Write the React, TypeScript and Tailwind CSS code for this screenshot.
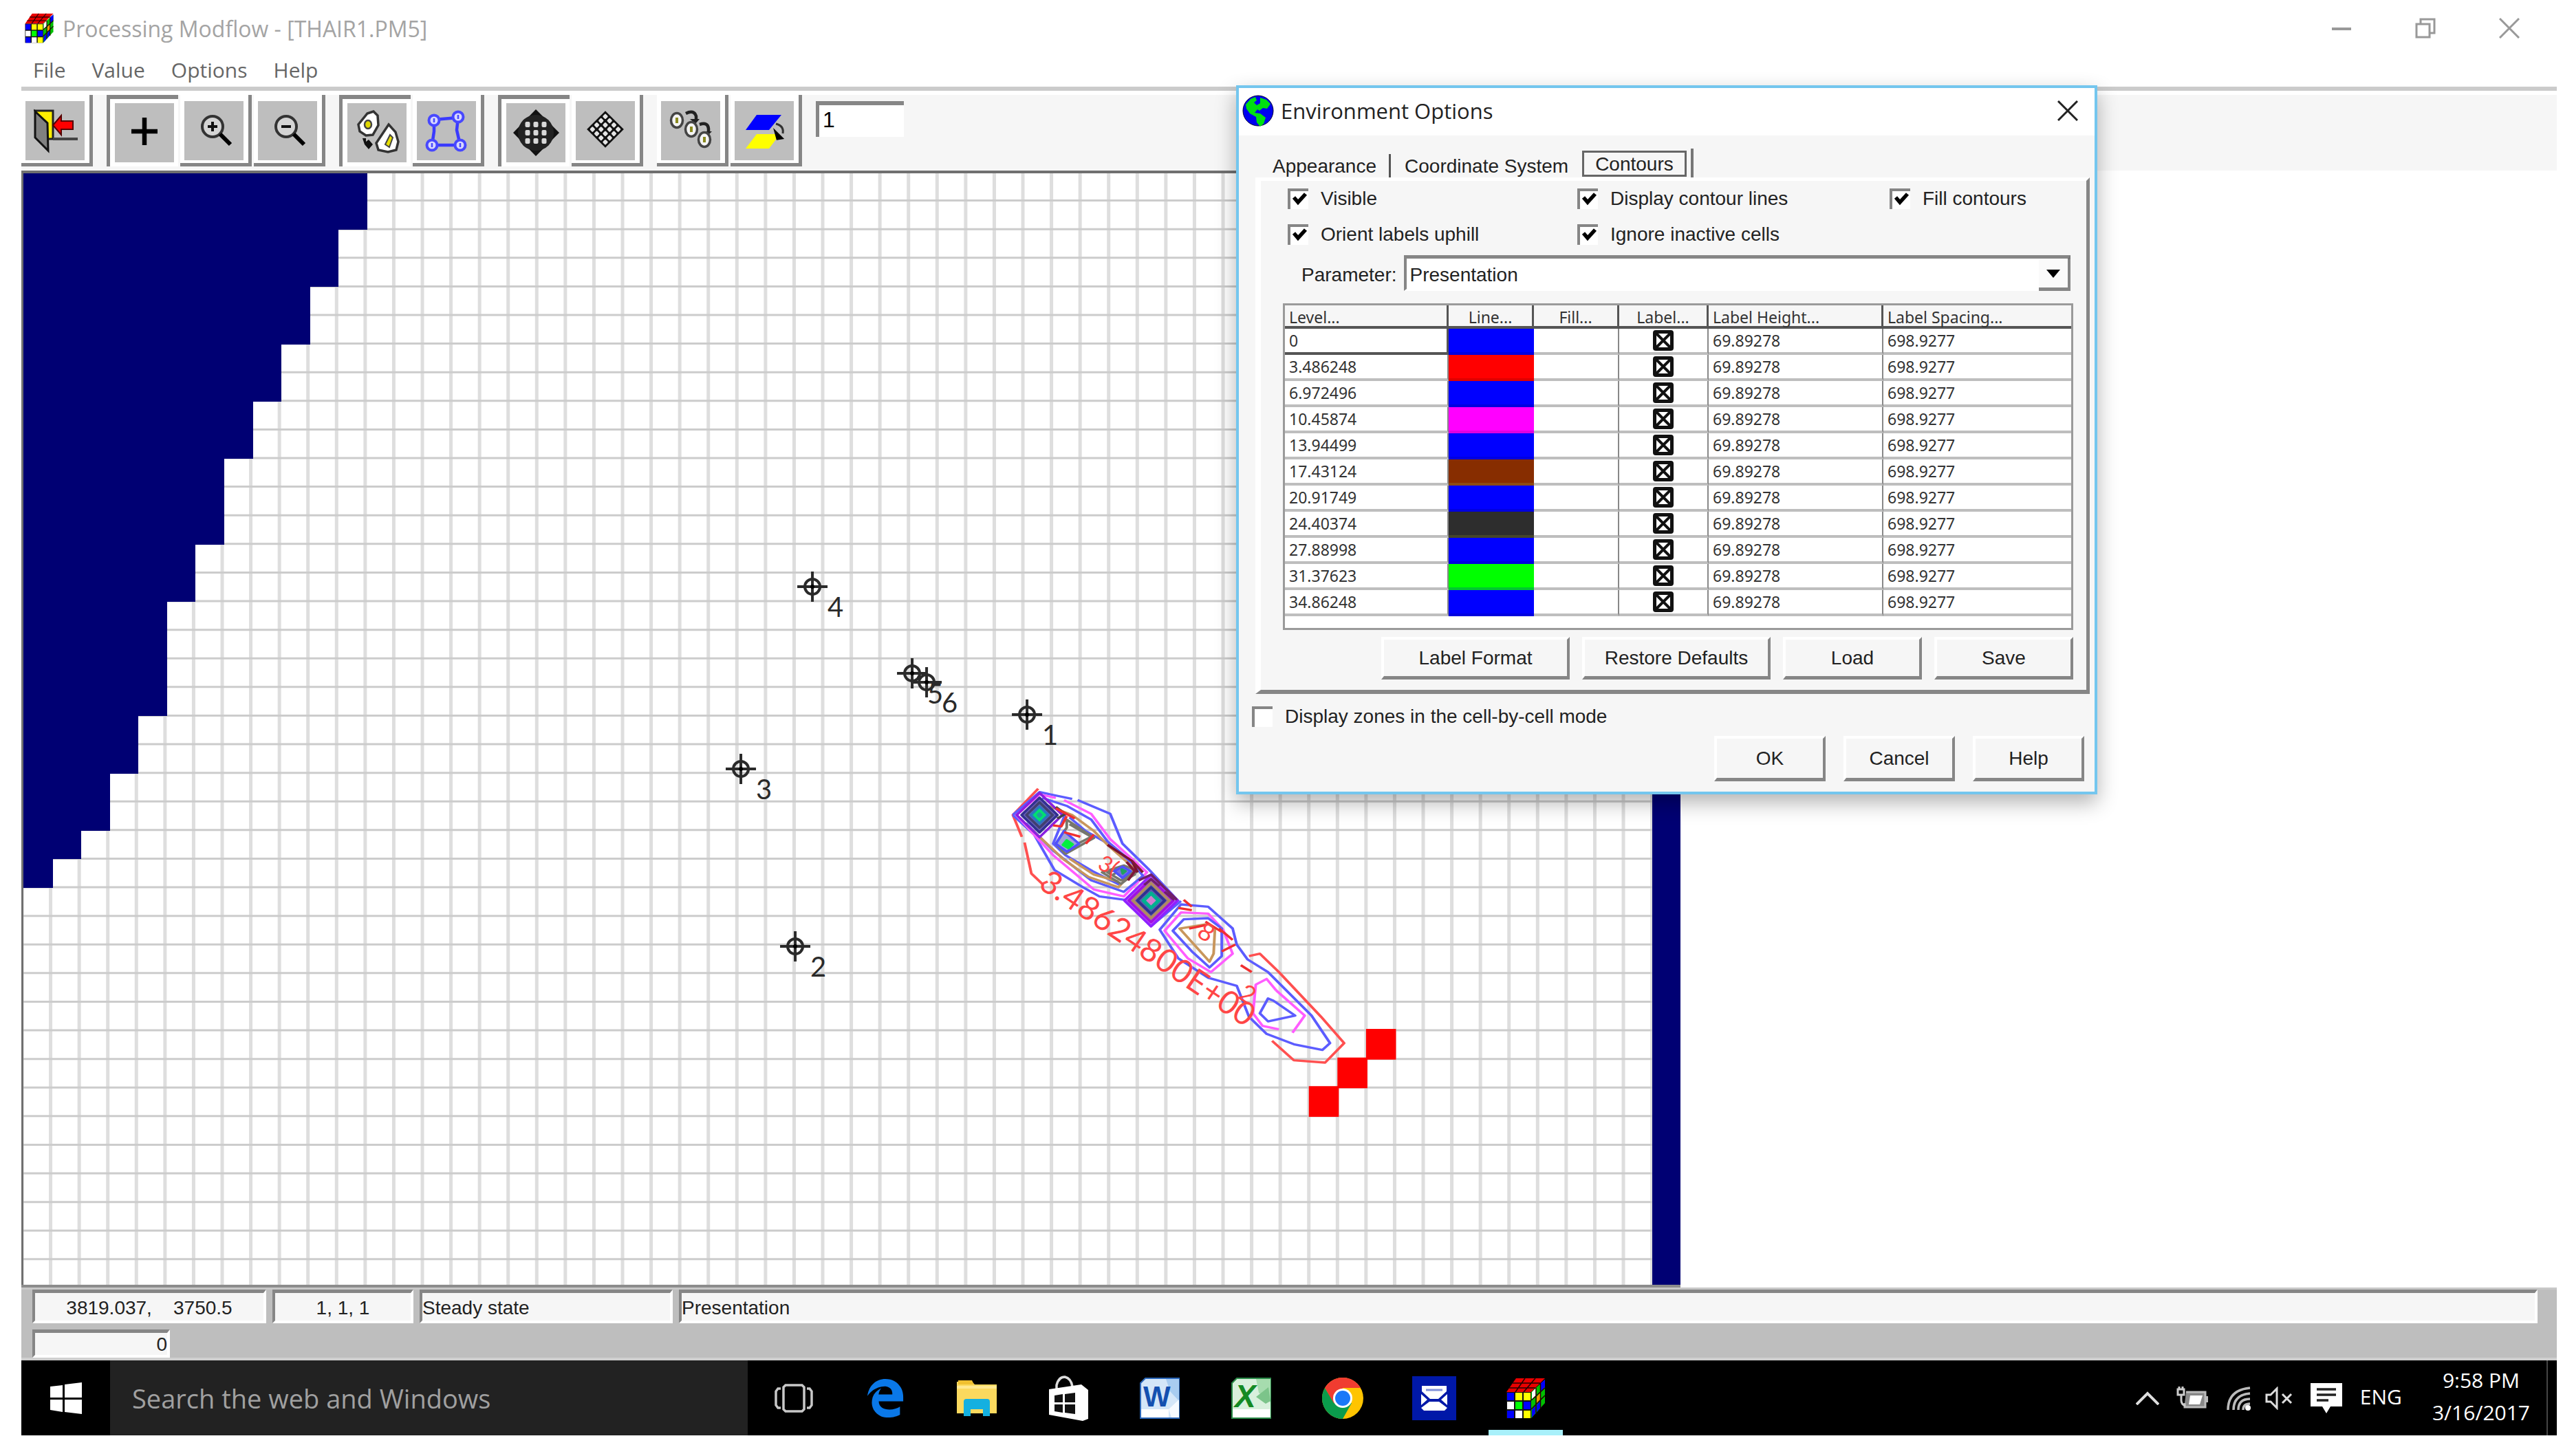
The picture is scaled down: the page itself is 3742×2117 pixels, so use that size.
import React, { useState } from 'react';
import { FaEdgeLegacy } from 'react-icons/fa';

// ---------- data ----------

interface ContourLevel {
  level: string;
  color: string;
}

const levels: ContourLevel[] = [
  { level: '0', color: 'bg-[#0000ff] border-[#0000e0]' },
  { level: '3.486248', color: 'bg-[#ff0000] border-[#e00000]' },
  { level: '6.972496', color: 'bg-[#0000ff] border-[#0000e0]' },
  { level: '10.45874', color: 'bg-[#ff00ff] border-[#e000e0]' },
  { level: '13.94499', color: 'bg-[#0000ff] border-[#0000e0]' },
  { level: '17.43124', color: 'bg-[#872d00] border-[#8c4a14]' },
  { level: '20.91749', color: 'bg-[#0000ff] border-[#0000e0]' },
  { level: '24.40374', color: 'bg-[#2d2d2d] border-[#45452a]' },
  { level: '27.88998', color: 'bg-[#0000ff] border-[#0000e0]' },
  { level: '31.37623', color: 'bg-[#00ff00] border-[#00c830]' },
  { level: '34.86248', color: 'bg-[#0000ff] border-[#0000e0]' },
];

const wells = [
  { id: 4, x: 1181, y: 853 },
  { id: 5, x: 1326, y: 979 },
  { id: 6, x: 1347, y: 992 },
  { id: 1, x: 1493, y: 1039 },
  { id: 3, x: 1077, y: 1118 },
  { id: 2, x: 1156, y: 1376 },
];

// Number of inactive (navy) cells at the start of every model row
const inactiveCells = [12, 12, 11, 11, 10, 10, 9, 9, 8, 8, 7, 7, 7, 6, 6, 5, 5, 5, 5, 4, 4, 3, 3, 2, 1];

const riverCells = [
  [47, 30],
  [46, 31],
  [45, 32],
];

// Model grid geometry
const COLS = 58;
const ROWS = 39;
const X0 = 32;
const Y0 = 250;
const CW = 41.57;
const CH = 41.6;

// ---------- shared icons ----------

const CubeIcon = ({ className }: { className: string }) => (
  <svg viewBox="0 0 60 60" className={className} aria-hidden="true">
    <path d="M2 21 16 1h42L38 21z" fill="#e80000" />
    <path d="M38 21 58 3v34L38 59z" fill="#00c000" />
    <path d="M2 21h36v38H2z" fill="#111" />
    <path d="M3 22h10v11H3zM27 35h10v11H27zM3 48h10v11H3z" fill="#0000ff" />
    <path d="M15 22h10v11H15zM27 22h10v11H27zM27 48h10v11H27z" fill="#ffff00" />
    <path d="M3 35h10v11H3zM15 48h10v11H15z" fill="#fff" />
    <path d="M15 35h10v11H15z" fill="#00ff00" />
    <path d="M52 8l6-5v11l-6 6zM39 47l5-6v11l-5 6zM46 40l5-6v10l-5 6z" fill="#0000ff" />
    <path d="M39 21l6-6v11l-6 6z" fill="#fff" />
    <path d="M46 28l5-6v10l-5 6z" fill="#f59a00" />
    <path d="M15 21 29 1M27 21 44 1M11 8h40M6 15h38M45 15v36M51.500 9v36M38 33l20-18M38 46l20-20" stroke="#200" strokeWidth="1.500" fill="none" />
  </svg>
);

const GlobeIcon = () => (
  <svg viewBox="0 0 46 46" className="size-[46px]" aria-hidden="true">
    <circle cx="23" cy="23" r="22" fill="#0000f0" stroke="#003" strokeWidth="1" />
    <path d="M5 14 12 6l7-3 2 5-4 3 4 4 5-3 0-8 9 3 6 6-5 7-6-1-5 4-3-2-4 5 8 1 8 6-3 9-5 4-5-6-1-8-9-5-5-7z" fill="#00e010" />
  </svg>
);

const ZoomGlass = ({ plus }: { plus?: boolean }) => (
  <svg viewBox="0 0 86 86" className="size-full" aria-hidden="true">
    <circle cx="41" cy="37" r="15" fill="#d4d4d4" stroke="#333" strokeWidth="4" />
    <path d="M52 48 67 63" stroke="#000" strokeWidth="6" />
    <path d="M34 37h14" stroke="#111" strokeWidth="4" />
    {plus && <path d="M41 30v14" stroke="#111" strokeWidth="4" />}
  </svg>
);

const dots = [0, 1, 2, 3];

// ---------- toolbar ----------

interface ToolButtonProps {
  label: string;
  pressed?: boolean;
  children: React.ReactNode;
}

const ToolButton = ({ label, pressed, children }: ToolButtonProps) => (
  <button
    type="button"
    aria-label={label}
    aria-pressed={!!pressed}
    className={
      pressed
        ? 'h-[104px] w-[104px] border-t-[6px] border-l-[5px] border-[#868686] bg-white pt-[6px] pr-[6px] pb-[6px] pl-[7px]'
        : 'h-[104px] w-[104px] border-r-[5px] border-b-[5px] border-[#868686] bg-white pt-[9px] pr-[7px] pb-[4px] pl-[6px]'
    }
  >
    <span className="block size-full bg-[#bebebe]">{children}</span>
  </button>
);

const Toolbar = () => (
  <div className="border-t-[6px] border-[#cbcbcb]">
    <div role="toolbar" className="flex h-[116px] items-start gap-[20px] border-t-[6px] border-white bg-[#f6f6f6]">
      <ToolButton label="Leave editor">
        <svg viewBox="0 0 86 86" className="size-full" aria-hidden="true">
          <path d="M14 14h26v41H30z" fill="#ffee00" stroke="#222" strokeWidth="3" />
          <path d="M14 15 32 32l1 40-19-19z" fill="#808080" stroke="#111" strokeWidth="3" />
          <path d="M40 55h36" stroke="#444" strokeWidth="4" />
          <path d="M40 35 52 21v8h17v12H52v8z" fill="#f00" stroke="#500" strokeWidth="2" />
        </svg>
      </ToolButton>

      <div className="flex gap-[3px]">
        <ToolButton label="Assign value" pressed>
          <svg viewBox="0 0 86 86" className="size-full" aria-hidden="true">
            <path d="M24 41h38M43 21v40" stroke="#000" strokeWidth="6.5" />
          </svg>
        </ToolButton>
        <ToolButton label="Zoom in"><ZoomGlass plus /></ToolButton>
        <ToolButton label="Zoom out"><ZoomGlass /></ToolButton>
      </div>

      <div className="flex gap-[3px]">
        <ToolButton label="Cell by cell" pressed>
          <svg viewBox="0 0 86 86" className="size-full" aria-hidden="true">
            <path d="M29 15 38 12l6 6 1 14-8 14-10 1-9-6-2-10z" fill="#fff" stroke="#333" strokeWidth="3.5" />
            <ellipse cx="30" cy="31" rx="5" ry="6" fill="#e0d800" stroke="#444" strokeWidth="2.5" />
            <path d="M60 31 70 42l4 14-3 12-12 3-14-3-3-10 6-9z" fill="#fff" stroke="#333" strokeWidth="3.5" />
            <path d="M55 60 62 46l4 4-5 14z" fill="#e8e000" stroke="#444" strokeWidth="2" />
            <path d="M22 51h5v5l4-3 6 7-6 7-6-7z" fill="#111" />
          </svg>
        </ToolButton>
        <ToolButton label="Polygon">
          <svg viewBox="0 0 86 86" className="size-full" aria-hidden="true">
            <path d="M25 27 60 24 58 42 63 64H22l3-20z" fill="none" stroke="#3a3aff" strokeWidth="4.5" />
            <g fill="#d8d8ff" stroke="#4848ff" strokeWidth="4">
              <circle cx="25" cy="28" r="7.5" />
              <circle cx="60" cy="23" r="7.5" />
              <circle cx="63" cy="64" r="7.5" />
              <circle cx="22" cy="64" r="7.5" />
            </g>
            <path d="M25 25v6M60 20v6M63 61v6M22 61v6" stroke="#4848ff" strokeWidth="2.5" />
          </svg>
        </ToolButton>
      </div>

      <div className="flex gap-[3px]">
        <ToolButton label="Row and column copy" pressed>
          <svg viewBox="0 0 86 86" className="size-full" aria-hidden="true">
            <path d="M43 9 77 43 43 77 10 43z" fill="#111" />
            <circle cx="43" cy="43" r="26" fill="#222" />
            {[31, 43, 55].map((y) =>
              [31, 43, 55].map((x) => <rect key={`${x}-${y}`} x={x - 3.5} y={y - 4} width="7" height="8" rx="2" fill="#d8d8d8" />)
            )}
          </svg>
        </ToolButton>
        <ToolButton label="Duplication">
          <svg viewBox="0 0 86 86" className="size-full" aria-hidden="true">
            <g transform="translate(43 41) rotate(45)">
              <rect x="-19" y="-19" width="38" height="38" fill="#111" />
              {dots.map((r) =>
                dots.map((c) => <rect key={`${r}-${c}`} x={c * 8.8 - 16.2} y={r * 8.8 - 16.2} width="6" height="6" rx="1.5" fill="#e4e4e4" />)
              )}
            </g>
          </svg>
        </ToolButton>
      </div>

      <div className="flex gap-[3px]">
        <ToolButton label="Row by row">
          <svg viewBox="0 0 86 86" className="size-full" aria-hidden="true">
            <path d="M36 18q12-6 15 4v6M56 34q12-4 13 6v6" fill="none" stroke="#222" strokeWidth="4.5" />
            <path d="M42 26h14l-6 7zM60 44h14l-6 6z" fill="#222" />
            {[[23, 28], [44, 41], [63, 56]].map(([x, y]) => (
              <g key={x}>
                <ellipse cx={x} cy={y} rx="8.5" ry="10.5" fill="#f4f4f4" stroke="#444" strokeWidth="3.5" />
                <path d={`M${x} ${y - 4}v8`} stroke="#8a8a20" strokeWidth="4" />
              </g>
            ))}
          </svg>
        </ToolButton>
        <ToolButton label="Layer copy">
          <svg viewBox="0 0 86 86" className="size-full" aria-hidden="true">
            <path d="M32 20h36L50 42H16z" fill="#0000ff" />
            <path d="M32 48h34L50 69H16z" fill="#ffff00" />
            <path d="M60 33q12 3 10 14" fill="none" stroke="#333" strokeWidth="3" />
            <path d="M59 44 69 54l-7 1z" fill="#000" stroke="#000" strokeWidth="3" />
          </svg>
        </ToolButton>
      </div>

      <input
        aria-label="Layer"
        defaultValue="1"
        className="mt-[9px] h-[52px] w-[128px] border-t-[6px] border-l-[5px] border-[#868686] bg-white pb-[4px] pl-[5px] font-['Liberation_Sans'] text-[32px] leading-none outline-none"
      />
    </div>
  </div>
);

// ---------- map ----------

const Diamond = ({ cx, cy, r, ...rest }: { cx: number; cy: number; r: number } & React.SVGProps<SVGPathElement>) => (
  <path d={`M${cx} ${cy - r * 1.15}L${cx + r} ${cy}L${cx} ${cy + r * 1.15}L${cx - r} ${cy}Z`} {...rest} />
);

const Contours = () => (
  <g>
    <g transform="translate(1440 1120) scale(0.3954 0.3333)" fill="none" strokeWidth="10" strokeLinejoin="round">
      {/* 3.486248 */}
      <g stroke="#ff5050">
        <path d="M175 80 82 195l33 95M125 315l25 135 40 45 20-10M950 810l40-10 70 80 155 195 85 115-70 85-115-10-80-85" />
      </g>
      {/* 6.972496 */}
      <g stroke="#5c5cff">
        <path d="M82 195 180 95l120 30M320 130l120 60 45 130 95 110 110 140M82 195l78 85 75 155 105 75 60 40 95 15 95 115 110-110" />
        <path d="m700 585 100 10 90 95 15 70 40 65 75 55 160 190 68 120-28 30-105-25-100-45-65-75-45-135-105-35-110-85-68-125z" />
      </g>
      {/* 10.45874 */}
      <g stroke="#ff5cff">
        <path d="m180 105 60 15M270 130l100 60 70 110 135 145-85 105-110-30-150-150-70-90-65-85 85-90" />
        <path d="m700 620 100 5 55 70 35 105-80 80-85-60-85-120zM1050 960l-35-50-40 25-10 125 35 55 60 15M1050 960l105 110-45 75" />
      </g>
      {/* 13.94499 */}
      <g stroke="#5c5cff">
        <path d="m190 120 90 35 90 60 60 95 90 90 40 60-70 70-120-50-140-130-100-120M275 190l-45 130 45 50 100 70 100 60" />
        <path d="m290 205 60 60 90 60 90 90M710 650l90-5 50 45v120l-45 50-65-70-70-90z" />
        <path d="m1020 995-30 65 30 35 100-25-80-65z" />
      </g>
      {/* 17.43124 */}
      <g stroke="#c8965c">
        <path d="m200 150 100 45 80 70 50 60 100 105-60 80-110-45-90-75-140-155M695 690l105-20 25 20-5 110-15 35z" />
        <path d="m290 385 90 70 90 30" />
      </g>
      {/* 24.40374 */}
      <g stroke="#77776c">
        <path d="m280 215 100 80-105 70-35-45 40-70zM410 445l80-30 50 25-60 55zM430 445l60-20 30 20-40 35z" />
        <path d="m290 235 80 55-90 55M450 455l40-25 40 25-45 30" />
        <path d="m430 325 90 70 20 50" stroke="#7a1030" />
      </g>
      {/* steep cells around the pumping wells */}
      <Diamond cx={180} cy={195} r={84} stroke="#8a20e0" />
      <Diamond cx={180} cy={195} r={66} fill="#6a60b8" stroke="#303090" />
      <Diamond cx={180} cy={195} r={48} stroke="#404070" />
      <Diamond cx={180} cy={195} r={32} fill="#00e070" stroke="#2878c0" />
      <Diamond cx={180} cy={195} r={6} fill="#20a0a0" stroke="#20a0a0" />
      <path d="m240 160 35 30-30 20" stroke="#444" />
      <path d="m270 265 55 55-45 35-40-35z" fill="#a0a4d8" stroke="#5050ff" />
      <path d="m280 305 22 18-16 16-20-14z" fill="#00f040" stroke="#00f040" />
      <path d="m455 440 30-20 30 20-30 30z" fill="#7a70e0" stroke="#5050ff" />
      <path d="m482 432 14 8-10 10z" fill="#20a060" stroke="#20a060" />
      <path d="m500 400 30 40-25 40M520 395l40 50" stroke="#801838" />
      <Diamond cx={590} cy={568} r={98} fill="#c060ff" stroke="#9020ff" />
      <Diamond cx={590} cy={568} r={82} fill="#a070a0" stroke="#a010e0" />
      <Diamond cx={590} cy={568} r={66} fill="#5a5ab0" stroke="#b08a60" />
      <Diamond cx={590} cy={568} r={50} stroke="#303090" />
      <Diamond cx={590} cy={568} r={28} fill="#d080d0" stroke="#00b090" strokeWidth="14" />
      <path d="m545 480 45-25 95 110M565 500l25-25 30 30M640 530l35 35" stroke="#70206a" />
      {/* leftovers of overprinted labels */}
      <g stroke="#f03030">
        <path d="m230 240 30 5 20-45M240 165l70 45M270 270l60 20M350 320l30-40M690 600l50 10M710 565l30 30M730 690l60-15M790 660l60 45M840 690l50 50M850 790l50-30M920 850l40 30" />
      </g>
    </g>
    <g fill="#ff4646" className="font-['Lato'] text-[47px]">
      <text transform="translate(1508 1290) rotate(34)">3.48624800E+00</text>
      <text transform="translate(1594 1262) rotate(28)" className="text-[32px]">3(</text>
      <text transform="translate(1738 1360) rotate(34)" className="text-[36px]">8</text>
      <text transform="translate(1798 1450) rotate(34)" className="text-[36px]">2</text>
    </g>
  </g>
);

const ModelMap = () => (
  <svg viewBox="31 248 2412 1624" className="block h-auto w-[65.44%]" role="img" aria-label="Model grid">
    <rect x="31" y="248" width="2412" height="1624" fill="#fff" />
    <g stroke="#dedede" strokeWidth="5">
      {Array.from({ length: COLS }, (_, i) => (
        <line key={i} x1={X0 + i * CW} x2={X0 + i * CW} y1="249" y2="1870" />
      ))}
    </g>
    <g stroke="#cccccc" strokeWidth="3">
      {Array.from({ length: ROWS }, (_, i) => (
        <line key={i} x1="32" x2="2443" y1={Y0 + i * CH} y2={Y0 + i * CH} />
      ))}
    </g>
    <g fill="#000073" shapeRendering="crispEdges">
      {inactiveCells.map((n, row) => (
        <rect key={row} x={X0} y={Y0 + row * CH} width={n * CW + 3} height={CH + 1} />
      ))}
      <rect x={X0 + (COLS - 1) * CW} y={Y0} width={CW} height="1621" />
    </g>
    <g fill="#ff0000">
      {riverCells.map(([c, r]) => (
        <rect key={c} x={X0 + c * CW} y={Y0 + r * CH - 2} width={CW + 2} height={CH + 3} />
      ))}
    </g>
    <Contours />
    {wells.map((w) => (
      <g key={w.id}>
        <g stroke="#2a2a2a" fill="none" strokeWidth="4">
          <circle cx={w.x} cy={w.y} r="11" />
          <path d={`M${w.x - 22} ${w.y}h44M${w.x} ${w.y - 22}v44`} />
          <circle cx={w.x} cy={w.y} r="3" fill="#000" stroke="none" />
        </g>
        <text x={w.x + 22} y={w.y + 44} fill="#2a2a2a" className="font-['Lato'] text-[40px]">{w.id}</text>
      </g>
    ))}
    <path d="M32 1872V250H2443" fill="none" stroke="#707070" strokeWidth="4" />
    <path d="M31 1870H2443" stroke="#8c8c8c" strokeWidth="4" />
  </svg>
);

// ---------- dialog ----------

const CheckField = ({ label, checked, className = '' }: { label: string; checked?: boolean; className?: string }) => {
  const [on, setOn] = useState(!!checked);
  return (
    <label className={`flex items-center gap-[18px] ${className}`}>
      <span className="relative block size-[30px]">
        <input
          type="checkbox"
          checked={on}
          onChange={() => setOn(!on)}
          className="block size-full appearance-none border-t-4 border-l-4 border-[#868686] bg-white"
        />
        {on && (
          <svg viewBox="0 0 30 30" className="pointer-events-none absolute inset-0" aria-hidden="true">
            <path d="m9 13 6 7 11-12" fill="none" stroke="#000" strokeWidth="5.5" />
          </svg>
        )}
      </span>
      {label}
    </label>
  );
};

const DialogButton = ({ children, className }: { children: React.ReactNode; className: string }) => (
  <button
    type="button"
    className={`border-t-4 border-r-4 border-b-[5px] border-l-4 border-t-white border-r-[#868686] border-b-[#868686] border-l-white bg-[#f6f6f6] ${className}`}
  >
    {children}
  </button>
);

const LevelTable = () => (
  <div className="mt-[18px] mr-[19px] ml-[32px] border-[3px] border-[#9a9a9a] bg-white pb-[17px]">
    <table className="w-full table-fixed border-separate border-spacing-0 font-['Noto_Sans'] text-[23px] leading-[30px] text-[#333]">
      <colgroup>
        <col className="w-[238px]" />
        <col className="w-[124px]" />
        <col className="w-[124px]" />
        <col className="w-[130px]" />
        <col className="w-[254px]" />
        <col />
      </colgroup>
      <thead>
        <tr className="h-[34px] bg-[#f6f6f6] text-left">
          {['Level...', 'Line...', 'Fill...', 'Label...', 'Label Height...', 'Label Spacing...'].map((h, i) => (
            <th
              key={h}
              className={`border-b-4 border-b-[#555] px-[6px] pt-[4px] pb-0 leading-[26px] font-normal whitespace-nowrap ${i < 5 ? 'border-r-[3px] border-r-[#555]' : ''} ${i > 0 && i < 4 ? 'text-center' : ''}`}
            >
              {h}
            </th>
          ))}
        </tr>
      </thead>
      <tbody>
        {levels.map((row, i) => (
          <tr key={row.level} className="h-[38px]">
            <td className={i === 0 ? 'border-r-[3px] border-b-4 border-[#555] px-[6px] py-0' : 'border-r-2 border-b-4 border-r-[#888] border-b-[#bebebe] px-[6px] py-0'}>
              {row.level}
            </td>
            <td className={`border-b-4 p-0 ${row.color}`} />
            <td className="border-r-2 border-b-4 border-r-[#888] border-b-[#bebebe] p-0" />
            <td className="border-r-2 border-b-4 border-r-[#888] border-b-[#bebebe] p-0">
              <span className="relative mx-auto block size-[30px]">
                <input type="checkbox" defaultChecked aria-label={`Label ${row.level}`} className="block size-full appearance-none rounded-[4px] border-[5px] border-[#111] bg-white" />
                <svg viewBox="0 0 30 30" className="pointer-events-none absolute inset-0" aria-hidden="true">
                  <path d="M5 5 25 25M25 5 5 25" stroke="#111" strokeWidth="4" />
                </svg>
              </span>
            </td>
            <td className="border-r-2 border-b-4 border-r-[#888] border-b-[#bebebe] px-[6px] py-0">69.89278</td>
            <td className="border-b-4 border-b-[#bebebe] px-[6px] py-0">698.9277</td>
          </tr>
        ))}
      </tbody>
    </table>
  </div>
);

const EnvironmentDialog = () => (
  <section
    role="dialog"
    aria-labelledby="env-title"
    className="absolute top-[124px] left-[1797px] w-[1252px] border-4 border-[#74c6ee] bg-[#f6f6f6] pb-[15px] font-['Liberation_Sans'] text-[28px] leading-[34px] text-[#222] shadow-[0_12px_28px_rgba(0,0,0,0.3)]"
  >
    <header className="flex h-[69px] items-center gap-[10px] bg-white pb-[4px] pl-[5px]">
      <GlobeIcon />
      <h2 id="env-title" className="font-['Open_Sans'] text-[31px]">Environment Options</h2>
      <button type="button" aria-label="Close" className="mr-[24px] ml-auto">
        <svg viewBox="0 0 30 30" className="size-[30px]" aria-hidden="true">
          <path d="M1 1 29 29M29 1 1 29" stroke="#222" strokeWidth="3" />
        </svg>
      </button>
    </header>

    <div role="tablist" className="flex h-[61px] items-end pl-[32px]">
      <button type="button" role="tab" aria-selected="false" className="h-[34px] border-r-[3px] border-[#555] pt-[2px] pr-[18px] pl-[17px] leading-[32px]">
        Appearance
      </button>
      <button type="button" role="tab" aria-selected="false" className="h-[34px] px-[20px] pt-[2px] leading-[32px]">
        Coordinate System
      </button>
      <button type="button" role="tab" aria-selected="true" className="flex h-[42px] items-start border-r-4 border-[#777] pt-[3px] pr-[6px]">
        <span className="border-[3px] border-[#666] px-[16px] pt-[2px] leading-[30px]">Contours</span>
      </button>
    </div>

    <div role="tabpanel" className="mr-[7px] ml-[24px] border-t-[5px] border-r-[5px] border-b-[6px] border-l-[8px] border-t-white border-r-[#868686] border-b-[#868686] border-l-white pb-[15px]">
      <div className="grid grid-cols-[421px_454px_1fr] pl-[39px]">
        <CheckField label="Visible" checked className="h-[52px]" />
        <CheckField label="Display contour lines" checked className="h-[52px]" />
        <CheckField label="Fill contours" checked className="h-[52px]" />
        <CheckField label="Orient labels uphill" checked className="h-[52px]" />
        <CheckField label="Ignore inactive cells" checked className="h-[52px]" />
      </div>

      <div className="mt-[4px] mr-[23px] flex items-center gap-[10px] pl-[59px]">
        <label htmlFor="parameter" className="pt-[5px]">Parameter:</label>
        <div className="relative flex-1">
          <select
            id="parameter"
            defaultValue="Presentation"
            className="block h-[52px] w-full appearance-none border-t-[5px] border-r-4 border-b-[3px] border-l-4 border-t-[#868686] border-r-[#777] border-b-white border-l-[#868686] bg-white pt-[3px] pl-[5px]"
          >
            <option>Presentation</option>
          </select>
          <span className="pointer-events-none absolute right-0 bottom-0 flex h-[46px] w-[46px] items-center justify-center border-r-4 border-b-[5px] border-[#868686] bg-[#fafafa]">
            <svg viewBox="0 0 20 12" className="h-[12px] w-[20px]" aria-hidden="true">
              <path d="M0 0h20L10 12z" fill="#000" />
            </svg>
          </span>
        </div>
      </div>

      <LevelTable />

      <div className="mt-[10px] mr-[19px] flex justify-end gap-[18px]">
        <DialogButton className="h-[62px] w-[274px]">Label Format</DialogButton>
        <DialogButton className="h-[62px] w-[274px]">Restore Defaults</DialogButton>
        <DialogButton className="h-[62px] w-[202px]">Load</DialogButton>
        <DialogButton className="h-[62px] w-[202px]">Save</DialogButton>
      </div>
    </div>

    <CheckField label="Display zones in the cell-by-cell mode" className="mt-[14px] ml-[19px] h-[38px]" />

    <div className="mt-[9px] mr-[15px] flex justify-end gap-[26px]">
      <DialogButton className="h-[66px] w-[162px]">OK</DialogButton>
      <DialogButton className="h-[66px] w-[162px]">Cancel</DialogButton>
      <DialogButton className="h-[66px] w-[162px]">Help</DialogButton>
    </div>
  </section>
);

// ---------- status bar ----------

const StatusPanel = ({ children, className }: { children: React.ReactNode; className: string }) => (
  <div className={`border-t-[5px] border-r-4 border-b-4 border-l-4 border-t-[#868686] border-r-white border-b-white border-l-[#868686] bg-[#f6f6f6] whitespace-pre ${className}`}>
    {children}
  </div>
);

const StatusBar = () => (
  <footer className="border-t-[3px] border-b-4 border-t-[#c8c8c8] border-b-[#cfcfcf] bg-[#bebebe] pr-[28px] pl-[16px] font-['Liberation_Sans'] text-[28px] text-[#222]">
    <div className="flex gap-[9px] leading-[44px]">
      <StatusPanel className="h-[49px] w-[340px] text-center">{'3819.037,    3750.5'}</StatusPanel>
      <StatusPanel className="h-[49px] w-[205px] text-center">1, 1, 1</StatusPanel>
      <StatusPanel className="h-[49px] w-[368px]">Steady state</StatusPanel>
      <StatusPanel className="h-[49px] flex-1">Presentation</StatusPanel>
    </div>
    <StatusPanel className="mt-[9px] h-[41px] w-[200px] text-right leading-[34px]">0</StatusPanel>
  </footer>
);

// ---------- taskbar ----------

const TaskButton = ({ label, active, children }: { label: string; active?: boolean; children: React.ReactNode }) => (
  <button type="button" aria-label={label} className="flex h-full w-[133px] flex-col items-center">
    <span className="flex flex-1 items-center">{children}</span>
    {active && <span className="-mt-[8px] block h-[8px] w-[108px] bg-[#a8f0fa]" />}
  </button>
);

const Taskbar = () => (
  <nav className="flex h-[109px] items-center bg-black font-['Open_Sans'] text-white">
    <button type="button" aria-label="Start" className="flex h-full w-[129px] items-center justify-center">
      <svg viewBox="0 0 46 46" className="size-[46px]" fill="#fff" aria-hidden="true">
        <path d="M0 6 18 4v18H0zM21 3 46 0v22H21zM0 25h18v18L0 40zM21 25h25v21l-25-3z" />
      </svg>
    </button>
    <input
      aria-label="Search"
      placeholder="Search the web and Windows"
      className="h-full w-[927px] bg-[#222] pl-[32px] text-[38px] outline-none placeholder:text-[#a0a0a0]"
    />

    <TaskButton label="Task view">
      <svg viewBox="0 0 56 42" className="h-[42px] w-[56px]" fill="none" stroke="#c8c8c8" strokeWidth="3.5" aria-hidden="true">
        <path d="M16 2h24l3 3v32l-3 3H16l-3-3V5zM9 7H5L2 11v20l3 4h4M47 7h4l3 4v20l-3 4h-4" />
      </svg>
    </TaskButton>
    <TaskButton label="Edge">
      <FaEdgeLegacy className="size-[58px] text-[#0a78e8]" />
    </TaskButton>
    <TaskButton label="File Explorer">
      <svg viewBox="0 0 58 52" className="h-[52px] w-[58px]" aria-hidden="true">
        <path d="M0 2h22l4 4h32v42H0z" fill="#fbd95e" />
        <path d="M2 0h20l3 6H2z" fill="#f0c030" />
        <path d="M0 8h58v4H0z" fill="#ffe890" />
        <path d="M10 31q0-4 4-4h30q4 0 4 4v21H38V42H20v10H10z" fill="#14b0e0" />
      </svg>
    </TaskButton>
    <TaskButton label="Store">
      <svg viewBox="0 0 58 66" className="h-[66px] w-[58px]" aria-hidden="true">
        <path d="M12 22V14Q15 2 24 2q9 2 11 14v4" fill="none" stroke="#ddd" strokeWidth="3.5" />
        <path d="M1 20 48 13l10 8v42l-8 3L1 57z" fill="#fff" />
        <path d="m9 29 12-2v12H9zM24 27l15-2v14H24zM9 42h12v12l-12-2zM24 42h15v14l-15-2z" fill="#111" />
      </svg>
    </TaskButton>
    <TaskButton label="Word">
      <svg viewBox="0 0 58 60" className="h-[60px] w-[58px]" aria-hidden="true">
        <path d="M8 1h50v58H1V8z" fill="#d4e6f8" stroke="#2a66b8" strokeWidth="2" />
        <path d="M38 2h19v32L44 20z" fill="#a8ccf0" />
        <path d="M2 46h40v12H2z" fill="#fff" />
        <text x="5" y="42" fill="#1450b0" className="font-['Liberation_Sans'] text-[42px] font-bold">W</text>
        <path d="m42 46 15-14v26H46z" fill="#f6faff" />
      </svg>
    </TaskButton>
    <TaskButton label="Excel">
      <svg viewBox="0 0 58 60" className="h-[60px] w-[58px]" aria-hidden="true">
        <path d="M8 1h50v58H1V8z" fill="#d8f0dc" stroke="#2a8a48" strokeWidth="2" />
        <path d="M36 2h21v34L40 22z" fill="#a6dcae" />
        <path d="M2 46h54v12H2z" fill="#fff" />
        <path d="m36 28 18-14 3 20-7 4z" fill="#7cc48a" />
        <text x="5" y="43" fill="#148a24" className="font-['Liberation_Sans'] text-[46px] font-bold italic">X</text>
      </svg>
    </TaskButton>
    <TaskButton label="Chrome">
      <svg viewBox="0 0 60 60" className="size-[60px]" aria-hidden="true">
        <circle cx="30" cy="30" r="30" fill="#ffc400" />
        <path d="M4 15A30 30 0 0 1 56 15H30L17 38z" fill="#f03c30" />
        <path d="M4 15A30 30 0 0 0 30 60L43 37 17 37z" fill="#0a9c4c" />
        <circle cx="30" cy="30" r="14" fill="#fff" />
        <circle cx="30" cy="30" r="11" fill="#1a78f8" />
      </svg>
    </TaskButton>
    <TaskButton label="Mail">
      <svg viewBox="0 0 64 64" className="size-[64px]" aria-hidden="true">
        <path d="M0 0h64v64H0z" fill="#0018a8" />
        <path d="M14 14h36v8L38 33H26L14 22zM13 26l9 8-9 8zM51 26v16l-9-8zM13 46l12-9h14l12 9-4 4H17z" fill="#fff" />
        <path d="M20 20h24" stroke="#8090d8" strokeWidth="3" />
      </svg>
    </TaskButton>
    <TaskButton label="Processing Modflow" active>
      <CubeIcon className="size-[60px]" />
    </TaskButton>

    <div className="ml-auto flex h-full items-center">
      <svg viewBox="0 0 34 20" className="mr-[25px] h-[20px] w-[34px]" fill="none" stroke="#ddd" strokeWidth="4" aria-label="Show hidden icons">
        <path d="M1 19 17 3l16 16" />
      </svg>
      <svg viewBox="0 0 46 34" className="mr-[27px] h-[34px] w-[46px]" aria-label="Battery">
        <path d="M14 8h28v22H12v-6" fill="#888" stroke="#bbb" strokeWidth="3" />
        <path d="M20 13h18l-4 13H18z" fill="#fff" />
        <path d="M43 14h3v9h-3z" fill="#bbb" />
        <path d="M2 4v8h9V4zM4 0v4M9 0v4M7 12v8q0 6 6 8" fill="none" stroke="#ccc" strokeWidth="3" />
      </svg>
      <svg viewBox="0 0 36 36" className="mr-[20px] size-[36px]" fill="none" stroke="#bbb" strokeWidth="3.5" aria-label="Network">
        <path d="M2 35Q2 6 34 3M10 35q0-22 24-24M17 35q0-16 17-16M24 35q0-9 10-9" />
        <circle cx="31" cy="32" r="4" fill="#fff" stroke="none" />
      </svg>
      <svg viewBox="0 0 40 34" className="mr-[26px] h-[34px] w-[40px]" fill="none" stroke="#ddd" strokeWidth="3" aria-label="Volume muted">
        <path d="M2 12h6l9-9v28l-9-9H2zM25 11l13 13M38 11 25 24" />
      </svg>
      <svg viewBox="0 0 46 44" className="mr-[26px] h-[44px] w-[46px]" aria-label="Notifications">
        <path d="M0 0h46v34H29l-6 10-6-10H0z" fill="#fff" />
        <path d="M9 9h28M9 17h28M9 25h17" stroke="#222" strokeWidth="3.5" />
      </svg>
      <span className="mr-[44px] pb-[4px] text-[30px]">ENG</span>
      <div className="mr-[24px] pb-[6px] text-center text-[30px] leading-[47px] whitespace-nowrap">
        <p>9:58 PM</p>
        <p>3/16/2017</p>
      </div>
      <span className="mr-[13px] block h-full w-[2px] bg-[#444]" />
    </div>
  </nav>
);

// ---------- page ----------

const App = () => (
  <div className="relative min-h-screen bg-white pr-[25px] pb-[30px] pl-[31px]">
    <header className="font-['Open_Sans']">
      <div className="flex h-[82px] items-center">
        <CubeIcon className="ml-[4px] size-[44px]" />
        <h1 className="ml-[12px] pt-[2px] text-[32px] text-[#a4a4a4]">Processing Modflow - [THAIR1.PM5]</h1>
        <div className="mr-[8px] ml-auto flex text-[#999]">
          <button type="button" aria-label="Minimize" className="flex h-[60px] w-[122px] items-center justify-center">
            <svg viewBox="0 0 30 30" className="size-[30px]" stroke="currentColor" strokeWidth="4" aria-hidden="true">
              <path d="M1 16h28" />
            </svg>
          </button>
          <button type="button" aria-label="Restore" className="flex h-[60px] w-[122px] items-center justify-center">
            <svg viewBox="0 0 30 30" className="size-[30px]" fill="none" stroke="currentColor" strokeWidth="3" aria-hidden="true">
              <path d="M2 9h19v19H2zM8 8V2h20v20h-6" />
            </svg>
          </button>
          <button type="button" aria-label="Close window" className="flex h-[60px] w-[122px] items-center justify-center">
            <svg viewBox="0 0 30 30" className="size-[30px]" stroke="currentColor" strokeWidth="3" aria-hidden="true">
              <path d="M1 1 29 29M29 1 1 29" />
            </svg>
          </button>
        </div>
      </div>
      <div role="menubar" className="flex h-[44px] items-center gap-[38px] pb-[6px] pl-[17px] text-[30px] text-[#666]">
        <button type="button" role="menuitem">File</button>
        <button type="button" role="menuitem">Value</button>
        <button type="button" role="menuitem">Options</button>
        <button type="button" role="menuitem">Help</button>
      </div>
    </header>
    <Toolbar />
    <main>
      <ModelMap />
    </main>
    <StatusBar />
    <Taskbar />
    <EnvironmentDialog />
  </div>
);

export default App;
